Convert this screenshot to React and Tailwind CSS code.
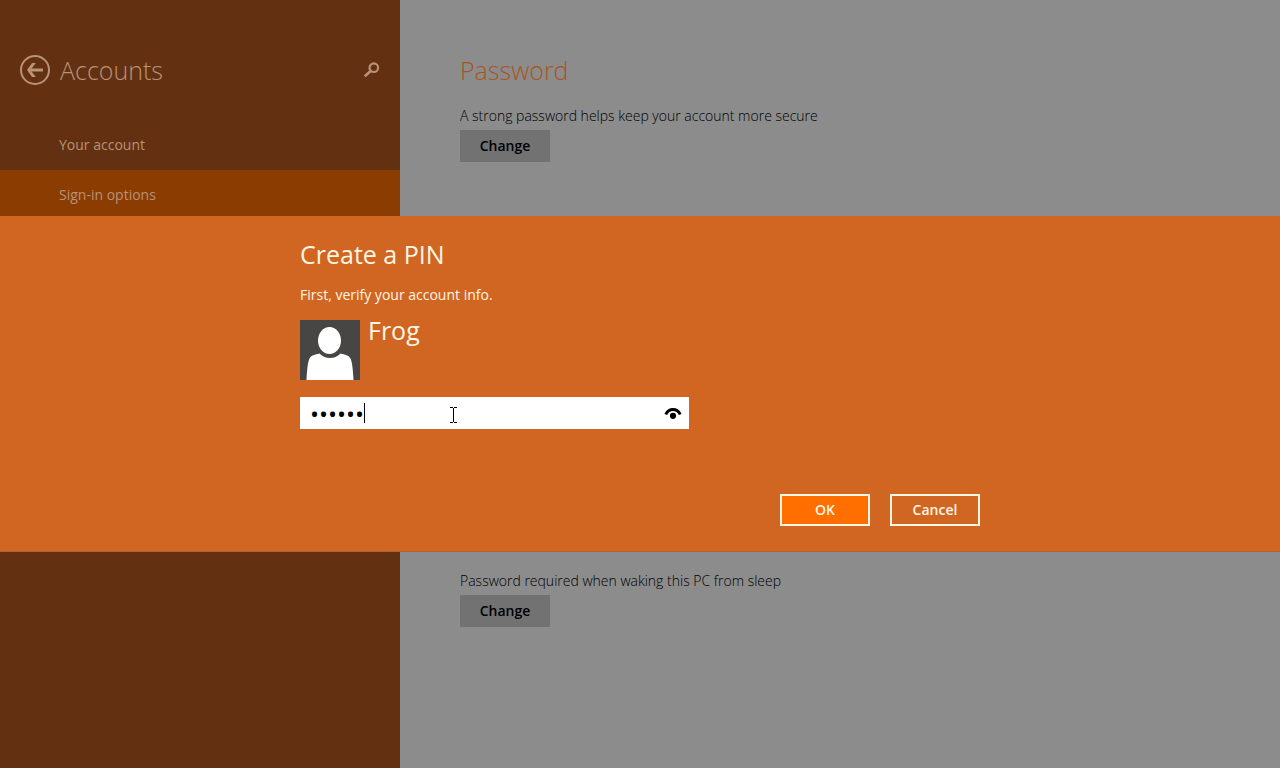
import { useState } from 'react'

const navItems = [
  { label: 'Your account', active: false },
  { label: 'Sign-in options', active: true },
]

function BackIcon() {
  return (
    <svg viewBox="0 0 30 30" className="size-[30px]" fill="none" stroke="currentColor" aria-hidden="true">
      <circle cx="15" cy="15" r="14" strokeWidth="2" />
      <path d="M9 15H23" strokeWidth="3" />
      <path d="M15.8 8H12l-5 7 5 7h3.800L10.500 15Z" fill="currentColor" stroke="none" />
    </svg>
  )
}

function SearchIcon() {
  return (
    <svg viewBox="0 0 16 16" className="size-4" fill="none" stroke="currentColor" aria-hidden="true">
      <circle cx="9.800" cy="5.700" r="4.300" strokeWidth="2.200" />
      <path d="M6.600 9 .8 14.400" strokeWidth="2.600" />
    </svg>
  )
}

function RevealIcon() {
  return (
    <svg viewBox="0 0 18 14" className="h-[14px] w-[18px]" aria-hidden="true">
      <path d="M1.800 8.500C3.300 5.200 6 3.600 9 3.600s5.700 1.600 7.200 4.900" fill="none" stroke="currentColor" strokeWidth="3" />
      <circle cx="9" cy="9.800" r="3.100" fill="currentColor" />
    </svg>
  )
}

function Avatar() {
  return (
    <svg viewBox="0 0 60 60" className="size-[60px] shrink-0 bg-[#484644]" aria-hidden="true">
      <path
        d="M6.500 60C7 50 7.800 42 9.500 38.500 11 35.500 15 34.500 19.500 33.500 22.500 36.500 26 38 30 38s7.500-1.500 10.500-4.500C45 34.500 49 35.500 50.500 38.500 52.200 42 53 50 53.500 60Z"
        fill="#fff"
      />
      <ellipse cx="29.500" cy="20.500" rx="11.500" ry="13.500" fill="#fff" />
    </svg>
  )
}

function TextCursor() {
  return (
    <svg viewBox="0 0 8 16" className="h-4 w-2" fill="none" stroke="#000" shapeRendering="crispEdges" aria-hidden="true">
      <path d="M0 .5h3M4 .5h3M3.500 1v14M0 15.500h3M4 15.500h3" />
    </svg>
  )
}

function Setting({ text }) {
  return (
    <div className="flex flex-col items-start gap-1">
      <p className="font-light">{text}</p>
      <button type="button" className="h-8 w-[90px] bg-[#727272] font-semibold">
        Change
      </button>
    </div>
  )
}

function Sidebar() {
  return (
    <aside className="w-[400px] shrink-0 bg-[#643012] text-[#b89279]">
      <header className="flex items-center px-5 pt-[50px]">
        <button type="button" aria-label="Back">
          <BackIcon />
        </button>
        <h1 className="ml-[10px] text-[25px] leading-10 font-light">Accounts</h1>
        <button type="button" aria-label="Search" className="ml-auto">
          <SearchIcon />
        </button>
      </header>
      <nav className="mt-[30px]">
        {navItems.map((item) => (
          <a
            key={item.label}
            href="#"
            className={`flex h-[50px] items-center pl-[59px] ${item.active ? 'bg-[#8b3c00]' : ''}`}
          >
            {item.label}
          </a>
        ))}
      </nav>
    </aside>
  )
}

function PinDialog() {
  const [password, setPassword] = useState('secret')

  return (
    <div className="fixed inset-0 flex items-center">
      <section
        role="dialog"
        aria-labelledby="pin-title"
        className="w-full border-b border-[#b0632c] bg-[#d16522] text-[#fff6e4]"
      >
        <form className="mx-auto w-[680px] pt-5 pb-[25px]" onSubmit={(e) => e.preventDefault()}>
          <h2 id="pin-title" className="text-[25px] leading-9">
            Create a PIN
          </h2>
          <label htmlFor="password" className="mt-[13px] block">
            First, verify your account info.
          </label>
          <div className="mt-[15px] flex gap-2">
            <Avatar />
            <span className="text-[25px] leading-5">Frog</span>
          </div>

          <div className="relative mt-[17px] flex h-8 w-[389px] items-center bg-white pr-[7px] pl-[10px] text-black">
            <input
              id="password"
              type="password"
              value={password}
              onChange={(e) => setPassword(e.target.value)}
              className="h-8 min-w-0 flex-1 text-[24px] outline-none"
            />
            <button type="button" aria-label="Show password">
              <RevealIcon />
            </button>
            {/* caret and mouse pointer */}
            <span className="absolute top-[6px] left-16 h-5 w-px bg-black" />
            <span className="absolute top-[10px] left-[150px]">
              <TextCursor />
            </span>
          </div>

          <div className="mt-[65px] flex justify-end gap-5 font-semibold">
            <button type="submit" className="h-8 w-[90px] border-2 border-[#fff6e4] bg-[#ff6f00]">
              OK
            </button>
            <button type="button" className="h-8 w-[90px] border-2 border-[#fff6e4]">
              Cancel
            </button>
          </div>
        </form>
      </section>
    </div>
  )
}

export default function App() {
  return (
    <div className="flex min-h-screen bg-[#8c8c8c] font-['Open_Sans',sans-serif] text-[14px] leading-5 text-black">
      <Sidebar />
      <main className="flex-1 pt-[50px] pl-[60px]">
        <h2 className="mb-4 text-[25px] leading-10 font-light text-[#a85420]">Password</h2>
        <div className="flex flex-col gap-[409px]">
          <Setting text="A strong password helps keep your account more secure" />
          <Setting text="Password required when waking this PC from sleep" />
        </div>
      </main>
      <PinDialog />
    </div>
  )
}
